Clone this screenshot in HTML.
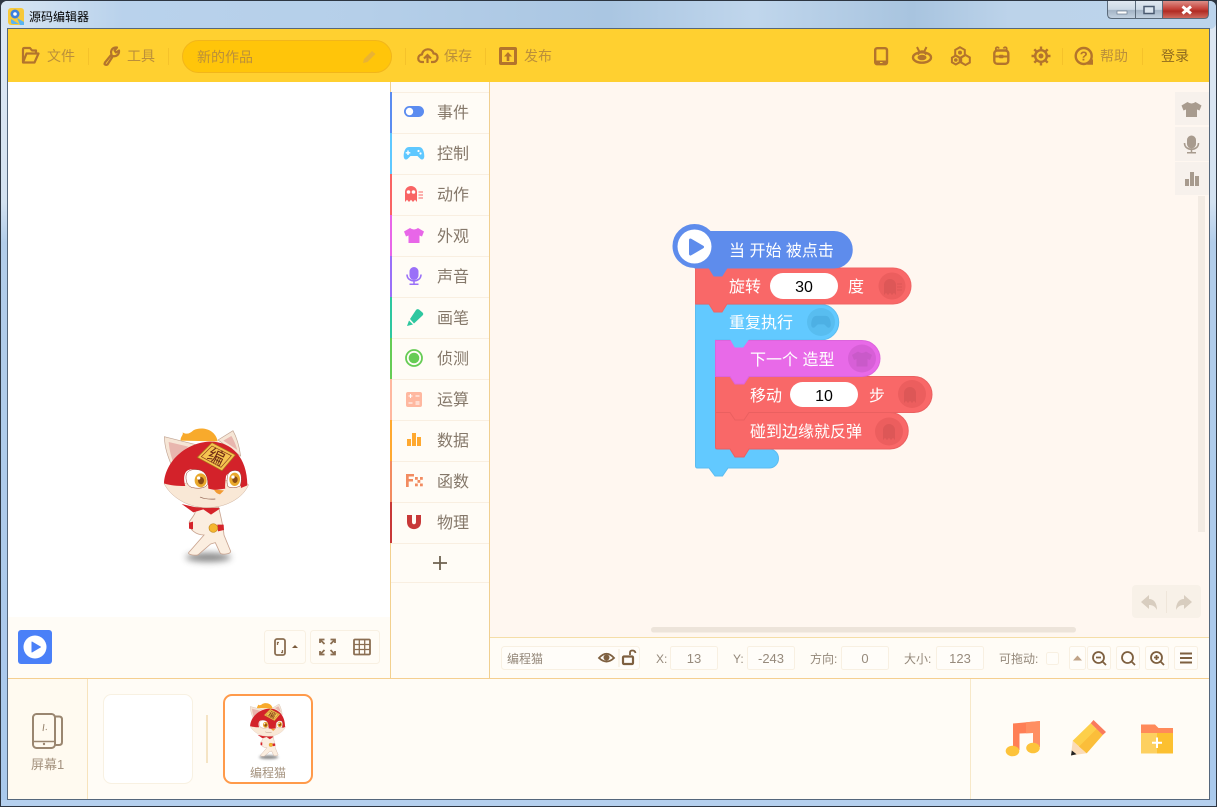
<!DOCTYPE html>
<html lang="zh"><head><meta charset="utf-8"><title>源码编辑器</title>
<style>
html,body{margin:0;padding:0;background:#fff;width:1217px;height:807px;overflow:hidden}
svg{display:block;position:absolute;left:0;top:0}
text{font-family:"Liberation Sans","Noto Sans CJK SC",sans-serif}
.tb{font-size:14px;fill:#bb8f3a}
.pl{font-size:16px;fill:#85786a}
.bk{font-size:16px;fill:#fff}
.st{font-size:12px;fill:#94887a}
.val{font-size:13px;fill:#978b7d;text-anchor:middle}
</style></head><body>
<svg width="1217" height="807" viewBox="0 0 1217 807" xmlns="http://www.w3.org/2000/svg">
<defs>
<linearGradient id="fr" x1="0" y1="0" x2="0" y2="1"><stop offset="0" stop-color="#dfe8f2"/><stop offset=".25" stop-color="#d3e2f1"/><stop offset=".3" stop-color="#b2cdea"/><stop offset="1" stop-color="#a9c9ec"/></linearGradient>
<linearGradient id="ti" x1="0" y1="0" x2="1" y2="0"><stop offset="0" stop-color="#d9e6f3"/><stop offset=".1" stop-color="#b9d2ec"/><stop offset=".3" stop-color="#b5cfe9"/><stop offset=".5" stop-color="#aac6e2"/><stop offset=".62" stop-color="#c0d6ec"/><stop offset=".75" stop-color="#a8c4df"/><stop offset=".83" stop-color="#bcd3ea"/><stop offset="1" stop-color="#bcd4ec"/></linearGradient>
<linearGradient id="cl" x1="0" y1="0" x2="0" y2="1"><stop offset="0" stop-color="#dc8f88"/><stop offset=".45" stop-color="#c6443c"/><stop offset=".6" stop-color="#b12c24"/><stop offset="1" stop-color="#cf6a5e"/></linearGradient>
<linearGradient id="mn" x1="0" y1="0" x2="0" y2="1"><stop offset="0" stop-color="#dfe8f1"/><stop offset=".5" stop-color="#ccd8e5"/><stop offset=".55" stop-color="#a3b4c6"/><stop offset="1" stop-color="#c2d1e0"/></linearGradient>
<filter id="bl" x="-60%" y="-200%" width="220%" height="500%"><feGaussianBlur stdDeviation="10"/></filter>
<path id="ghost" d="M-6 8V-2a6 6 0 0 1 12 0V8L4 5.800 2 8 0 5.800-2 8-4 5.800Z"/>
<path id="shirt" d="M-10-4-4-7.500Q0-4.500 4-7.500L10-4 8 1 5.500 0V7.500H-5.500V0L-8 1Z"/>
<path id="pad" d="M-5-6.500H5C9-6.500 10.300-1 10.300 2.500 10.300 6 8 7 6 5L3.500 2.500H-3.500L-6 5C-8 7-10.300 6-10.300 2.500-10.300-1-9-6.500-5-6.500Z"/>
<g id="mic"><rect x="-4.500" y="-9" width="9" height="13" rx="4.500"/><path d="M-7-1.500C-7 7 7 7 7-1.500" fill="none" stroke="currentColor" stroke-width="1.600"/><path d="M0 4V8M-4.500 8.300H4.500" stroke="currentColor" stroke-width="1.500" fill="none"/></g>
<g id="cat">
 <ellipse cx="205" cy="412" rx="68" ry="13" fill="#777" filter="url(#bl)" opacity=".9"/>
 <path d="M122 62C120 50 131 46 128 37 140 45 150 40 160 31 182 19 226 25 233 64Z" fill="#f8aa2c"/>
 <path d="M73 50 168 74 96 140C84 110 74 85 73 50Z" fill="#f6e6d6" stroke="#c2a594" stroke-width="2"/>
 <path d="M86 66 145 80 98 122C92 105 88 88 86 66Z" fill="#e8b6ae"/>
 <path d="M279 32 234 60 302 108C298 80 292 55 279 32Z" fill="#f6e6d6" stroke="#c2a594" stroke-width="2"/>
 <path d="M274 48 250 62 292 90C288 76 282 60 274 48Z" fill="#e8b6ae"/>
 <path d="M148 305C145 330 170 345 192 345L146 398C142 405 172 408 176 403L212 372 226 368 240 398C244 406 272 402 272 394L252 345C250 320 244 295 236 262H166C170 280 158 290 148 305Z" fill="#fbeee0" stroke="#c9a490" stroke-width="2.500"/>
 <path d="M125 252 168 262 235 264 240 266 213 284 190 268 160 277Z" fill="#d5242b"/>
 <path d="M147 308 159 305 159 328 147 326ZM232 314 251 314 252 330 234 334Z" fill="#d5242b"/>
 <circle cx="220" cy="324" r="13" fill="#f5b62f" stroke="#c08a20" stroke-width="2"/>
 <path d="M72 190C90 228 140 263 200 263 262 263 310 232 326 194L300 178 130 190Z" fill="#f9e8d6" stroke="#cdb09c" stroke-width="1.500"/>
 <path d="M72 190C76 122 140 68 208 65 272 63 322 110 322 196L303 204C300 160 262 150 258 170 255 190 255 204 256 206L225 210 205 206C206 165 175 140 145 150 128 158 132 185 136 198 112 198 90 196 72 190Z" fill="#d3222a"/>
 <path d="M138 170C138 150 160 146 178 150 196 154 204 172 203 190 200 204 180 207 158 203 144 200 137 186 138 170Z" fill="#fff" stroke="#8a3a2a" stroke-width="1.500"/>
 <path d="M262 170C264 152 284 148 296 154 306 160 306 184 300 198 290 204 272 204 264 200 260 190 261 180 262 170Z" fill="#fff" stroke="#8a3a2a" stroke-width="1.500"/>
 <ellipse cx="182" cy="181" rx="18" ry="21" fill="#e9a82c"/><ellipse cx="183" cy="182" rx="9" ry="11" fill="#8a4b12"/><circle cx="176" cy="174" r="5" fill="#fff"/>
 <ellipse cx="284" cy="178" rx="16" ry="20" fill="#e9a82c"/><ellipse cx="285" cy="179" rx="8" ry="10" fill="#8a4b12"/><circle cx="279" cy="171" r="5" fill="#fff"/>
 <path d="M222 209 252 211 240 223C232 222 226 217 222 209Z" fill="#f29a32"/>
 <path d="M180 231C195 238 210 238 226 237" fill="none" stroke="#8a5a48" stroke-width="2"/>
 <path d="M216 68 286 105 246 152 172 112Z" fill="#f5c34f" stroke="#a8761c" stroke-width="2"/>
 <path d="M216 78 274 107 243 142 184 110Z" fill="none" stroke="#8a3a1c" stroke-width="2"/>
 <text x="229" y="128" font-size="50" fill="#6f2a14" text-anchor="middle" transform="rotate(26 229 110)">编</text>
</g>
</defs>

<!-- window frame -->
<rect width="1217" height="807" fill="#2d3642"/>
<rect x="1" y="1" width="1215" height="805" rx="6" fill="url(#fr)"/>
<rect x="1" y="1" width="1215" height="28" rx="6" fill="url(#ti)"/>
<rect x="1" y="800" width="1215" height="6" fill="#b5d0ee"/>
<rect x="7" y="28" width="1203" height="772" fill="#55677c"/>

<!-- title -->
<rect x="8" y="8" width="16" height="17" rx="3" fill="#f7c93a"/>
<circle cx="15" cy="14" r="4.500" fill="#3d7fe0"/><circle cx="15" cy="14" r="1.800" fill="#fff"/>
<path d="M11 19 19 24H13Q11 24 11 22ZM17 18 24 22V25H20Z" fill="#5ab4f0"/>
<text x="29" y="21" font-size="12" fill="#000">源码编辑器</text>

<!-- window controls -->
<path d="M1107 1H1209V14Q1209 19 1204 19H1112Q1107 19 1107 14Z" fill="#5a6a7a"/>
<path d="M1108 1H1135V18H1112Q1108 18 1108 14Z" fill="url(#mn)"/>
<rect x="1136" y="1" width="26" height="17" fill="url(#mn)"/>
<path d="M1163 1H1208V14Q1208 18 1204 18H1163Z" fill="url(#cl)"/>
<rect x="1117" y="11" width="10" height="3" fill="#fff" stroke="#6a7a8e" stroke-width=".7"/>
<rect x="1144" y="6.500" width="10" height="7" fill="#dbe5ef" stroke="#4a5a70" stroke-width="1.500"/>
<path d="M1182.500 6.500 1191 13.500M1191 6.500 1182.500 13.500" stroke="#fff" stroke-width="3"/>

<!-- toolbar -->
<rect x="8" y="29" width="1201" height="53" fill="#ffd030"/>
<g stroke="#f5c22a" stroke-width="1"><path d="M88.500 48V65M168.500 48V65M405.500 48V65M485.500 48V65M1062.500 48V65M1142.500 48V65"/></g>
<g fill="none" stroke="#b3742c" stroke-width="2.200">
 <path d="M23 62V49.500Q23 48 24.500 48H30L32 50.500H36V53.500M23 62.500H34.500L38.500 53.500H26.500L23 62.500Z" stroke-linejoin="round"/>
 <path d="M105 62.500 111.500 54.500C110 50 113 47 117 47.500L114.500 50.500 116 52.500 119 50.500C119.500 54.500 116 57 113 56L107.500 64.500Q105.500 65.500 104.500 64Z" stroke-linejoin="round"/>
 <path d="M424 62H422C417 62 417 55 422 54.500 423 48 432 47.500 433.500 53.500 439 53 439 62 433 62H431" stroke-linejoin="round"/>
 <path d="M427.500 63V55.500M424 58.500 427.500 55 431 58.500"/>
</g>
<rect x="499" y="47" width="18" height="18" rx="2" fill="#b3742c"/>
<rect x="502" y="50" width="12" height="12" fill="#ffd030"/>
<path d="M508 52 504 56.500H506.700V61H509.300V56.500H512Z" fill="#b3742c"/>
<text class="tb" x="47" y="61">文件</text>
<text class="tb" x="127" y="61">工具</text>
<text class="tb" x="444" y="61">保存</text>
<text class="tb" x="524" y="61">发布</text>
<rect x="182.500" y="40.500" width="209" height="32" rx="16" fill="#ffc50a" stroke="#f2b61a"/>
<text class="tb" x="197" y="62">新的作品</text>
<path d="M363 63 364 59 372 51 375.500 54 367.500 62Z" fill="#e9b334"/>

<!-- toolbar right icons -->
<g fill="none" stroke="#b3742c" stroke-width="2.400">
 <rect x="875.200" y="48.200" width="11.800" height="16" rx="2"/>
 <path d="M917 47 919.500 52M926.500 47 924 52" stroke-width="2"/>
 <path d="M917.500 54.500Q922 48.500 926.500 54.500"/>
 <ellipse cx="922" cy="57.500" rx="9" ry="5.200"/>
 <polygon points="960,47.200 964.800,49.900 964.800,55.300 960,58 955.200,55.300 955.200,49.900" stroke-width="2"/>
 <polygon points="955.800,55.500 959.700,57.750 959.700,62.250 955.800,64.500 951.900,62.250 951.900,57.750" stroke-width="2"/>
 <polygon points="965.500,55 969.800,57.500 969.800,62.500 965.500,65 961.200,62.500 961.200,57.500" stroke-width="2"/>
 <rect x="994.300" y="50.500" width="14" height="13.300" rx="3"/>
 <path d="M994 56.500H1008.500" stroke-width="2"/>
 <path d="M996 50C995 47 998 46.500 999 48.500M1006.500 50C1007.500 47 1004.500 46.500 1003.500 48.500" stroke-width="1.800"/>
 <circle cx="1041" cy="56" r="5.800"/>
 <path d="M1041 46.500V50M1041 62V65.500M1031.500 56H1035M1047 56H1050.500M1034.300 49.300 1036.800 51.800M1045.200 60.200 1047.700 62.700M1034.300 62.700 1036.800 60.200M1045.200 51.800 1047.700 49.300"/>
 <circle cx="1083.700" cy="56" r="8"/>
</g>
<rect x="875" y="60.500" width="12.500" height="4" fill="#b3742c"/>
<rect x="880" y="62" width="2.500" height="1" fill="#ffd030"/>
<ellipse cx="922" cy="57.500" rx="4.500" ry="2.800" fill="#b3742c"/>
<circle cx="960" cy="52.600" r="2" fill="#b3742c"/><circle cx="955.800" cy="60" r="1.800" fill="#b3742c"/>
<rect x="999" y="54.800" width="4.500" height="3.400" rx=".8" fill="#b3742c"/>
<circle cx="1041" cy="56" r="2.500" fill="#b3742c"/>
<path d="M1087 64.800H1093V59Z" fill="#b3742c"/>
<text x="1083.700" y="60.500" font-size="13" font-weight="700" fill="#b3742c" text-anchor="middle">?</text>
<text class="tb" x="1100" y="61">帮助</text>
<text x="1161" y="61" font-size="14" fill="#8f6a1e">登录</text>

<!-- stage -->
<rect x="8" y="82" width="382" height="535" fill="#ffffff"/>
<rect x="8" y="617" width="382" height="61" fill="#fffcf6"/>
<use href="#cat" transform="translate(140 420) scale(.3333)"/>
<rect x="18" y="630" width="34" height="34" rx="3" fill="#4a80f8"/>
<circle cx="35" cy="647" r="11.500" fill="#fff"/>
<path d="M32 642 40.500 647 32 652Z" fill="#4a80f8" stroke="#4a80f8" stroke-linejoin="round"/>
<g fill="#fffcf6" stroke="#f8f0e2"><rect x="264.500" y="630.500" width="41" height="33" rx="3"/><rect x="310.500" y="630.500" width="69" height="33" rx="3"/></g>
<g fill="none" stroke="#8a6e52" stroke-width="1.800">
 <rect x="275" y="639" width="10" height="16" rx="2"/>
 <path d="M279 642.500H277.500V645M281 652.500H282.500V650" stroke-width="1.300"/>
 <path d="M320 643V639.500H324.500M335 643V639.500H330.500M320 651V654.500H324.500M335 651V654.500H330.500M320.500 640 324.500 644M334.500 640 330.500 644M320.500 654 324.500 650M334.500 654 330.500 650"/>
 <rect x="354" y="639.500" width="16" height="15" rx="1"/>
 <path d="M354 644.500H370M354 649.500H370M359.300 639.500V654.500M364.700 639.500V654.500" stroke-width="1.300"/>
</g>
<path d="M292 648 295 645 298 648Z" fill="#7a5a3c"/>

<!-- stage/palette borders -->
<rect x="390" y="82" width="1" height="596" fill="#f2d08e"/>
<rect x="391" y="82" width="98" height="596" fill="#fffcf6"/>
<rect x="489" y="82" width="1" height="596" fill="#f0cf90"/>
<rect x="490" y="82" width="719" height="555" fill="#fff7f0"/>

<!-- palette rows -->
<g fill="#f9efe1">
 <rect x="391" y="92" width="98" height="1"/><rect x="391" y="133" width="98" height="1"/><rect x="391" y="174" width="98" height="1"/><rect x="391" y="215" width="98" height="1"/><rect x="391" y="256" width="98" height="1"/><rect x="391" y="297" width="98" height="1"/><rect x="391" y="338" width="98" height="1"/><rect x="391" y="379" width="98" height="1"/><rect x="391" y="420" width="98" height="1"/><rect x="391" y="461" width="98" height="1"/><rect x="391" y="502" width="98" height="1"/><rect x="391" y="543" width="98" height="1"/><rect x="391" y="582" width="98" height="1"/>
</g>
<rect x="390" y="92" width="2" height="41" fill="#5b8cf0"/>
<rect x="390" y="133" width="2" height="41" fill="#5fc8ff"/>
<rect x="390" y="174" width="2" height="41" fill="#f96464"/>
<rect x="390" y="215" width="2" height="41" fill="#e866e8"/>
<rect x="390" y="256" width="2" height="41" fill="#9a70f8"/>
<rect x="390" y="297" width="2" height="41" fill="#2ec7a0"/>
<rect x="390" y="338" width="2" height="41" fill="#66cc55"/>
<rect x="390" y="379" width="2" height="41" fill="#ffb8a0"/>
<rect x="390" y="420" width="2" height="41" fill="#ffa930"/>
<rect x="390" y="461" width="2" height="41" fill="#f28b60"/>
<rect x="390" y="502" width="2" height="41" fill="#c83838"/>
<text class="pl" x="437" y="118">事件</text>
<text class="pl" x="437" y="159">控制</text>
<text class="pl" x="437" y="200">动作</text>
<text class="pl" x="437" y="241.500">外观</text>
<text class="pl" x="437" y="282">声音</text>
<text class="pl" x="437" y="323.500">画笔</text>
<text class="pl" x="437" y="364">侦测</text>
<text class="pl" x="437" y="405">运算</text>
<text class="pl" x="437" y="446">数据</text>
<text class="pl" x="437" y="487">函数</text>
<text class="pl" x="437" y="528">物理</text>
<!-- palette icons -->
<rect x="404" y="106" width="20" height="11" rx="5.500" fill="#5b8cf0"/><circle cx="409.500" cy="111.500" r="3.700" fill="#fff"/>
<use href="#pad" transform="translate(414 153.500)" fill="#5fc8ff"/>
<path d="M408 150.500V155M405.700 152.800H410.300" stroke="#fff" stroke-width="1.400"/><circle cx="418.500" cy="151" r="1.100" fill="#fff"/><circle cx="420.500" cy="153.500" r="1.100" fill="#fff"/>
<use href="#ghost" transform="translate(411 194)" fill="#f96464"/>
<circle cx="408.500" cy="192" r="1.800" fill="#fff"/><circle cx="413.500" cy="192" r="1.800" fill="#fff"/>
<path d="M418.500 192H423M418.500 195H423M418.500 198H423" stroke="#f96464" stroke-width="1"/>
<use href="#shirt" transform="translate(414 235.500)" fill="#e866e8"/>
<use href="#mic" transform="translate(414 276)" fill="#9a70f8" style="color:#9a70f8"/>
<path d="M407 326 409 320.500 413 324.500ZM410 319 416 310Q417 308.500 419 309.500L422.500 312.500Q424 314 422.500 315.500L414 323.500Z" fill="#2ec7a0"/>
<circle cx="414" cy="358" r="8" fill="none" stroke="#66cc55" stroke-width="1.800"/><circle cx="414" cy="358" r="5.300" fill="#66cc55"/>
<rect x="406" y="392" width="16" height="15" rx="2" fill="#ffb8a0"/>
<path d="M408.500 396H412.500M410.500 394V398M415.500 396H419.500M408.500 403H412.500M415.500 402H419.500M415.500 404H419.500" stroke="#fff" stroke-width="1.100"/>
<rect x="407" y="439" width="4" height="7" fill="#ffa930"/><rect x="412" y="433" width="4" height="13" fill="#ffa930"/><rect x="417" y="437" width="4" height="9" fill="#ffa930"/>
<path d="M406 474H414V476.500H408.700V479H413V481.500H408.700V487H406Z" fill="#f28b60"/>
<g fill="#f28b60"><rect x="415" y="477" width="2.800" height="2.800"/><rect x="420" y="477" width="2.800" height="2.800"/><rect x="417.500" y="480" width="2.800" height="2.800"/><rect x="415" y="483.500" width="2.800" height="2.800"/><rect x="420" y="483.500" width="2.800" height="2.800"/></g>
<path d="M407 515H412V522C412 525 416 525 416 522V515H421V522C421 531.500 407 531.500 407 522Z" fill="#c83838"/>
<path d="M440 556V570M433 563H447" stroke="#6e6250" stroke-width="1.800"/>

<!-- blocks -->
<g stroke-width="1">
 <path d="M695.500 304.500H821A17.500 17.500 0 0 1 821 340H715.500V449H769A9.500 9.500 0 0 1 769 468H728L722.500 476H715L709 468H697.500Q695.500 468 695.500 466Z" fill="#62c9ff" stroke="#5cbcf0"/>
 <path d="M715.500 412.500H890A18 18 0 0 1 890 449H749L744 457H735L730 449H717.500Q715.500 449 715.500 447Z" fill="#f96868" stroke="#ea6060"/>
 <path d="M715.500 376.500H914A18 18 0 0 1 914 412.500H749L744 420H735L730 412.500H715.500Z" fill="#f96868" stroke="#ea6060"/>
 <path d="M715.500 340.500H862A18 18 0 0 1 862 376.500H749L744 384H735L730 376.500H715.500Z" fill="#e86ae8" stroke="#dc64dc"/>
 <path d="M731 340 735 347H743L748 340Z" fill="#62c9ff" stroke="#62c9ff"/>
 <path d="M695.500 268H893A18 18 0 0 1 893 304H727L722 312H714L709 304H695.500Z" fill="#f96868" stroke="#f06464"/>
 <circle cx="694.500" cy="246" r="21.500" fill="#5e8cec" stroke="#5e8cec"/>
 <path d="M700 231.500H834A18 18 0 0 1 834 268H727L722 276H714L709 268H695V250Z" fill="#5e8cec" stroke="#5e8cec"/>
</g>
<circle cx="694.500" cy="246.500" r="17" fill="#fff"/>
<path d="M690.500 240 702.500 247 690.500 254Z" fill="#5e8cec" stroke="#5e8cec" stroke-width="3" stroke-linejoin="round"/>
<rect x="770" y="273" width="68" height="26" rx="13" fill="#fff"/>
<rect x="790" y="382" width="68" height="25" rx="12.500" fill="#fff"/>
<circle cx="892" cy="286" r="13.500" fill="#ec5e5e"/><use href="#ghost" transform="translate(890 287)" fill="#dd5757"/><path d="M897 284H902M897 287H902M897 290H902" stroke="#dd5757"/>
<circle cx="821" cy="322" r="14" fill="#58bdf0"/><use href="#pad" transform="translate(821 322) scale(.95)" fill="#4db0e4"/>
<circle cx="862" cy="358.500" r="14" fill="#d75fd7"/><use href="#shirt" transform="translate(862 359)" fill="#c95ac9"/>
<circle cx="912" cy="394" r="14" fill="#ec5e5e"/><use href="#ghost" transform="translate(910 395)" fill="#dd5757"/>
<circle cx="889" cy="431.500" r="14" fill="#ec5e5e"/><use href="#ghost" transform="translate(889 432)" fill="#dd5757"/>
<text class="bk" x="729" y="256">当 开始 被点击</text>
<text class="bk" x="729" y="292">旋转</text>
<text x="804" y="292" font-size="16" fill="#000" text-anchor="middle">30</text>
<text class="bk" x="848" y="292">度</text>
<text class="bk" x="729" y="328">重复执行</text>
<text class="bk" x="750" y="365">下一个 造型</text>
<text class="bk" x="750" y="401">移动</text>
<text x="824" y="401" font-size="16" fill="#000" text-anchor="middle">10</text>
<text class="bk" x="869" y="401">步</text>
<text class="bk" x="750" y="437">碰到边缘就反弹</text>

<!-- side tabs, scrollbars, undo -->
<rect x="1198" y="196" width="7" height="336" fill="#f3ebe3"/>
<g fill="#f7f1ec"><rect x="1175" y="92" width="34" height="33"/><rect x="1175" y="127" width="34" height="34"/><rect x="1175" y="162" width="34" height="33"/></g>
<use href="#shirt" transform="translate(1191.500 109.500)" fill="#a89b8e"/>
<use href="#mic" transform="translate(1191.500 144.500)" fill="#a89b8e" style="color:#a89b8e"/>
<rect x="1185" y="179" width="4" height="7" fill="#a89b8e"/><rect x="1190" y="172" width="4" height="14" fill="#a89b8e"/><rect x="1195" y="176" width="4" height="10" fill="#a89b8e"/>
<rect x="651" y="627" width="425" height="5.500" rx="2.700" fill="#ede4da"/>
<rect x="1132" y="585" width="69" height="33" rx="4" fill="#f8f1e8"/>
<rect x="1166" y="591" width="1" height="22" fill="#efe6da"/>
<path d="M1141 602 1149 595V599C1154 599 1157 603 1157 610 1155 606 1152 605 1149 605V609Z" fill="#d8cdbf"/>
<path d="M1192 602 1184 595V599C1179 599 1176 603 1176 610 1178 606 1181 605 1184 605V609Z" fill="#d8cdbf"/>

<!-- status bar -->
<rect x="490" y="637" width="719" height="1" fill="#f5dea8"/>
<rect x="490" y="638" width="719" height="40" fill="#fffcf6"/>
<g fill="#fffdf9" stroke="#f8f0e2">
 <rect x="501.500" y="646.500" width="138" height="23" rx="3"/>
 <rect x="670.500" y="646.500" width="47" height="23" rx="2"/>
 <rect x="747.500" y="646.500" width="47" height="23" rx="2"/>
 <rect x="841.500" y="646.500" width="47" height="23" rx="2"/>
 <rect x="936.500" y="646.500" width="47" height="23" rx="2"/>
 <rect x="1046.500" y="652.500" width="12" height="12" rx="2"/>
 <rect x="1069.500" y="646.500" width="16" height="23" rx="2"/>
 <rect x="1087.500" y="646.500" width="23" height="23" rx="2"/>
 <rect x="1116.500" y="646.500" width="23" height="23" rx="2"/>
 <rect x="1145.500" y="646.500" width="23" height="23" rx="2"/>
 <rect x="1174.500" y="646.500" width="23" height="23" rx="2"/>
</g>
<text class="st" x="507" y="663">编程猫</text>
<path d="M599 658Q606.500 649.500 614 658 606.500 665 599 658Z" fill="none" stroke="#7e6040" stroke-width="1.800"/><circle cx="606.500" cy="657.500" r="3" fill="#7e6040"/>
<rect x="618.500" y="649" width="1" height="18" fill="#f3e9d8"/>
<rect x="623" y="656.500" width="10" height="7.500" rx="1" fill="none" stroke="#7e6040" stroke-width="2.200"/>
<path d="M630 655V652.500Q630 650.500 632.500 650.500 635 650.500 635.500 653" fill="none" stroke="#7e6040" stroke-width="1.800"/>
<text class="st" x="656" y="663">X:</text>
<text class="val" x="694" y="663">13</text>
<text class="st" x="733" y="663">Y:</text>
<text class="val" x="771" y="663">-243</text>
<text class="st" x="810" y="663">方向:</text>
<text class="val" x="865" y="663">0</text>
<text class="st" x="904" y="663">大小:</text>
<text class="val" x="960" y="663">123</text>
<text class="st" x="999" y="663">可拖动:</text>
<path d="M1073 660.500 1077.500 655.500 1082 660.500Z" fill="#c0a388"/>
<g fill="none" stroke="#7e6040" stroke-width="1.800">
 <circle cx="1098.500" cy="657.500" r="5.500"/><path d="M1102.500 661.500 1106 665M1096 657.500H1101"/>
 <circle cx="1127.500" cy="657.500" r="5.500"/><path d="M1131.500 661.500 1135 665"/>
 <circle cx="1156.500" cy="657.500" r="5.500"/><path d="M1160.500 661.500 1164 665M1154 657.500H1159M1156.500 655V660"/>
 <path d="M1180 653.500H1192M1180 658H1192M1180 662.500H1192" stroke-width="2"/>
</g>

<!-- bottom bar -->
<rect x="8" y="679" width="1201" height="120" fill="#fffcf6"/>
<rect x="8" y="678" width="1201" height="1" fill="#f5cf90"/>
<rect x="8" y="679" width="79" height="120" fill="#fffaf0"/>
<rect x="87" y="679" width="1" height="120" fill="#f7e3bd"/>
<rect x="970" y="679" width="1" height="120" fill="#f7e8c8"/>
<g fill="none" stroke="#9a8670" stroke-width="2">
 <path d="M55 716.500H59Q62 716.500 62 719.500V742Q62 745 59 745H55"/>
 <rect x="33" y="714" width="22" height="34" rx="3.500" fill="#fffaf0"/>
 <path d="M33 741.500H55" stroke-width="1.500"/>
</g>
<circle cx="44" cy="744" r="1.200" fill="#9a8670"/>
<path d="M44 724 43 731M46 729 46.500 730" stroke="#9a8670" stroke-width="1" fill="none"/>
<text x="31" y="769" font-size="13" fill="#a5937f">屏幕1</text>
<rect x="103.500" y="694.500" width="89" height="89" rx="8" fill="#fff" stroke="#f8f1e2"/>
<rect x="206" y="715" width="2" height="48" fill="#f5e4c4"/>
<rect x="224" y="695" width="88" height="88" rx="8" fill="#fff" stroke="#ff9a4a" stroke-width="2"/>
<use href="#cat" transform="translate(240 699.500) scale(.14)"/>
<text x="268" y="777" font-size="12" fill="#a5937f" text-anchor="middle">编程猫</text>

<!-- bottom right icons -->
<path d="M1013 723.500 1040 721V747L1033 746V733L1019.500 733.500V750L1013 751Z" fill="#ff7f55"/>
<path d="M1026 722.300 1040 721V747L1033 746V733L1026 733.300Z" fill="#ff8f62"/>
<ellipse cx="1012.500" cy="751" rx="6.800" ry="5.300" fill="#fdc33a"/>
<ellipse cx="1033" cy="748" rx="6.800" ry="5.300" fill="#fdc33a"/>
<path d="M1072.700 740.700 1086.700 753.300 1071 755.500Z" fill="#fbdcb8"/>
<path d="M1071 755.500 1071.800 750.500 1076.500 754.200Z" fill="#222"/>
<path d="M1072.700 740.700 1090.700 723.300 1102.700 735 1086.700 753.300Z" fill="#fdcf4a"/>
<path d="M1079 746.500 1096.500 729 1102.700 735 1086.700 753.300Z" fill="#fbbe3a"/>
<path d="M1090.700 723.300 1093.500 720 1106 732 1102.700 735Z" fill="#fa7a5c"/>
<path d="M1141 724.500H1155L1158.500 728H1173V733H1141Z" fill="#ff8a5a"/>
<rect x="1141" y="733" width="32" height="20.500" fill="#fdd060"/>
<rect x="1157" y="733" width="16" height="20.500" fill="#fcc030"/>
<path d="M1157 737.500V748M1152 742.800H1162" stroke="#fff" stroke-width="2"/>
</svg>
</body></html>
